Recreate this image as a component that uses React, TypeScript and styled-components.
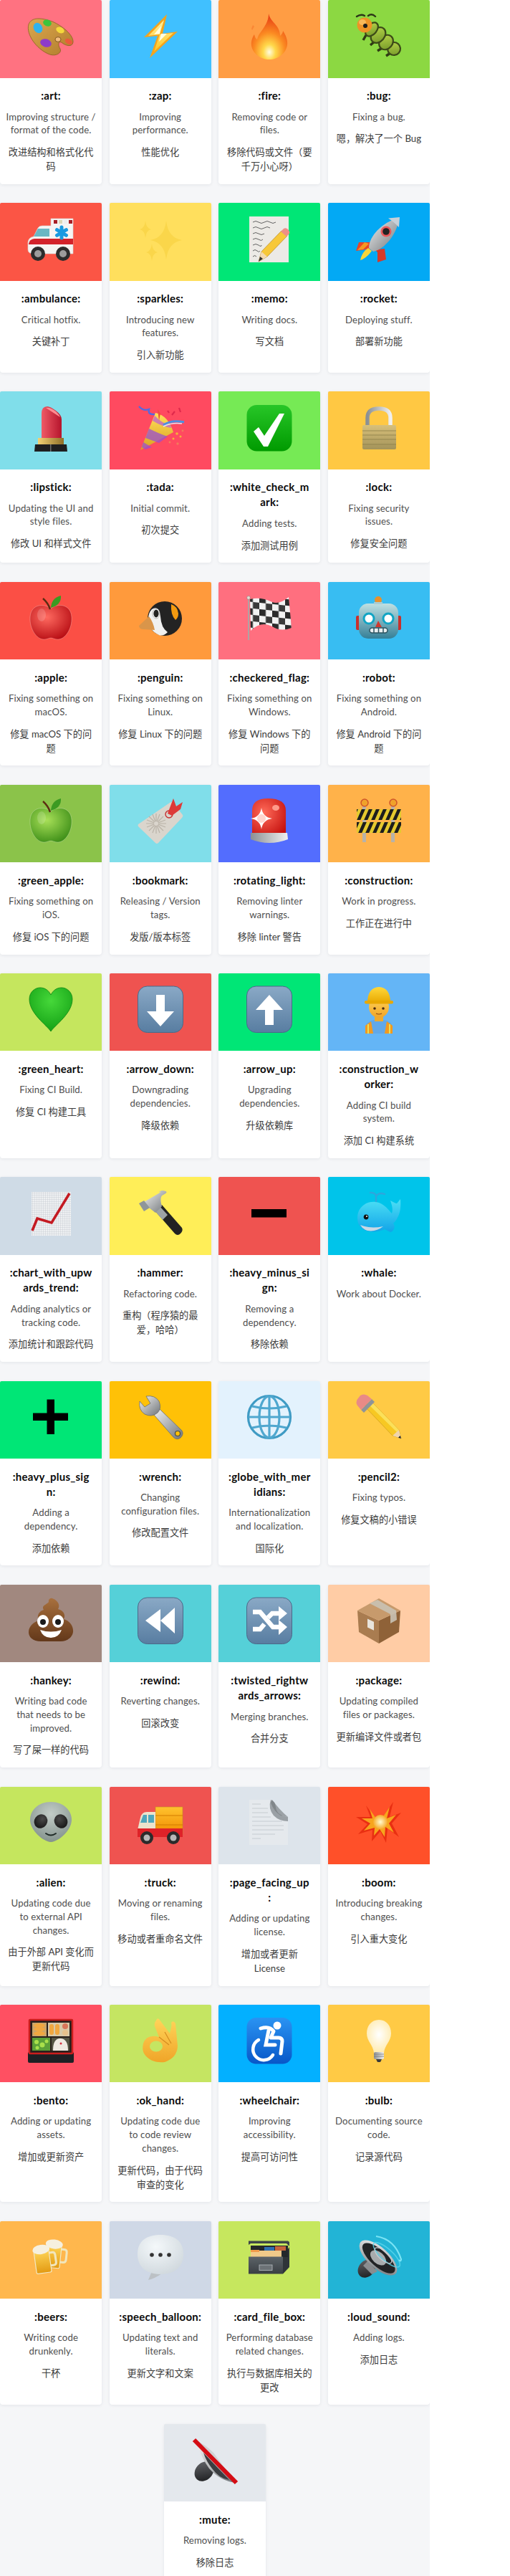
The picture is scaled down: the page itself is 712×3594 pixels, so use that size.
import React from "react";
import styled, { createGlobalStyle } from "styled-components";

const Global = createGlobalStyle`
  html, body { margin: 0; padding: 0; background: #fff; }
  body { font-family: "Lato", "Noto Sans CJK SC", sans-serif; }
`;

const Page = styled.main`
  width: 600px;
  height: 3594px;
  overflow: hidden;
  background: #f5f6f8;
`;
const Grid = styled.div`
  display: flex;
  flex-wrap: wrap;
  justify-content: center;
  align-content: flex-start;
  gap: 26.4px 10.5px;
`;
const Card = styled.article`
  width: 142.1px;
  display: flex;
  flex-direction: column;
  background: #fff;
  border-radius: 4px;
  box-shadow: 0 1px 4px rgba(30, 40, 60, 0.08);
`;
const Thumb = styled.div<{ $bg: string }>`
  height: 108.5px;
  flex: none;
  box-sizing: border-box;
  padding-top: 18.5px;
  display: flex;
  justify-content: center;
  align-items: flex-start;
  background: ${(p) => p.$bg};
  border-radius: 2px 2px 0 0;
`;
const Emoji = styled.svg`
  width: 64px;
  height: 64px;
  display: block;
  overflow: visible;
`;
const Body = styled.div`
  padding: 14.5px 2px 14.8px;
  text-align: center;
`;
const Title = styled.h3`
  margin: 0;
  font-size: 15px;
  line-height: 21.2px;
  font-weight: 700;
  letter-spacing: 0.25px;
  color: #0a0a0a;
  white-space: pre;
`;
const Desc = styled.p`
  margin: 9.3px 0 0;
  font-size: 13.2px;
  line-height: 18.7px;
  font-weight: 400;
  letter-spacing: 0.1px;
  color: #4f4f4f;
  white-space: pre;
`;
const Zh = styled.p`
  margin: 11px 0 0;
  font-size: 13.2px;
  line-height: 20px;
  font-weight: 400;
  color: #3c3c3c;
  white-space: pre;
`;
const Hidden = styled.svg`
  position: absolute;
  width: 0;
  height: 0;
`;

const lg = (id: string, a: string, b: string, x2 = 0, y2 = 1) => (
  <linearGradient id={id} x1="0" y1="0" x2={x2} y2={y2}>
    <stop offset="0" stopColor={a} />
    <stop offset="1" stopColor={b} />
  </linearGradient>
);
const rg = (id: string, a: string, b: string, cx = 0.4, cy = 0.35, r = 0.7) => (
  <radialGradient id={id} cx={cx} cy={cy} r={r}>
    <stop offset="0" stopColor={a} />
    <stop offset="1" stopColor={b} />
  </radialGradient>
);

const Defs = () => (
  <Hidden aria-hidden="true">
    <defs>
      {lg("btn", "#8aa9c6", "#587da1")}
      {lg("chk", "#27c627", "#009a00")}
      {lg("wch", "#2a93f2", "#0857c8")}
      {lg("metal", "#f1f1f1", "#6f7478", 1, 1)}
      {lg("metalH", "#8b9094", "#f0f0f0", 1, 0)}
      {lg("gold", "#d8c07a", "#a3935a")}
      {lg("brass", "#f3d173", "#8f6f28", 1, 0)}
      {lg("pal", "#dca84f", "#b07c2c", 1, 1)}
      {lg("bolt", "#fff2a0", "#ffc51f")}
      {lg("lip", "#ef5a66", "#b5142c", 1, 0)}
      {lg("hat", "#ffd83a", "#e8a800")}
      {lg("skin", "#ffd45a", "#f0a528")}
      {lg("head", "#bfe0e2", "#357f97")}
      {lg("cone", "#ffe05a", "#d9a020")}
      {lg("poo", "#a8703d", "#63381a")}
      {lg("beer", "#ffd75a", "#e39a12")}
      {lg("whale", "#4de0f5", "#12a4e8")}
      {lg("truck", "#ffc22e", "#f08c00")}
      {lg("file", "#5c6368", "#3a3f43")}
      {lg("mag", "#6a6c70", "#161719", 1, 1)}
      {lg("cat", "#bcd84c", "#6f9426", 1, 1)}
      {rg("redA", "#ff6a60", "#b80e14")}
      {rg("grnA", "#a8e058", "#3e8f18")}
      {rg("heart", "#46d83a", "#0d9a10", 0.5, 0.3, 0.8)}
      <radialGradient id="fire" cx="0.5" cy="0.84" r="0.78">
        <stop offset="0" stopColor="#fffce0" />
        <stop offset="0.22" stopColor="#ffd84a" />
        <stop offset="0.55" stopColor="#fb8a22" />
        <stop offset="1" stopColor="#e83f14" />
      </radialGradient>
      {rg("alien", "#c3cdc8", "#7b8a85", 0.5, 0.3, 0.8)}
      {rg("siren", "#ff6a58", "#c4100e", 0.35, 0.4, 0.8)}
      {rg("bulb", "#ffffff", "#ffe9a8", 0.5, 0.45, 0.62)}
      {rg("glob", "#f4f8fa", "#c9d2d8", 0.4, 0.3, 0.9)}
      {rg("penH", "#4a4a4a", "#111", 0.5, 0.3, 0.8)}
      {rg("boom", "#fffbd0", "#f6a21a", 0.5, 0.5, 0.55)}
      <pattern id="checks" width="18" height="18" patternUnits="userSpaceOnUse" patternTransform="skewY(6)">
        <rect width="18" height="18" fill="#f2f2f2" />
        <rect width="9" height="9" fill="#2b2b2b" />
        <rect x="9" y="9" width="9" height="9" fill="#3a3a3a" />
      </pattern>
      <pattern id="hazard" width="10" height="14" patternUnits="userSpaceOnUse" patternTransform="skewX(-24)">
        <rect width="10" height="14" fill="#1d1d1d" />
        <rect width="5" height="14" fill="#e5c92e" />
      </pattern>
      <pattern id="chartGrid" width="3" height="3" patternUnits="userSpaceOnUse">
        <rect width="3" height="3" fill="#eef0f2" />
        <path d="M3 0H0V3" fill="none" stroke="#b9c0c6" strokeWidth=".6" />
      </pattern>
    </defs>
  </Hidden>
);

const star = (cx: number, cy: number, rx: number, ry: number) =>
  `M${cx} ${cy - ry}Q${cx + rx * 0.12} ${cy - ry * 0.12} ${cx + rx} ${cy}Q${cx + rx * 0.12} ${cy + ry * 0.12} ${cx} ${cy + ry}Q${cx - rx * 0.12} ${cy + ry * 0.12} ${cx - rx} ${cy}Q${cx - rx * 0.12} ${cy - ry * 0.12} ${cx} ${cy - ry}Z`;

const Art = (
  <>
    <path d="M1 15C5 4 20 6 34 11C48 17 64 30 63 40C62 47 53 45 48 41C43 37 41 43 45 49C48 55 38 61 28 56C12 49-3 29 1 15Z" fill="url(#pal)" stroke="#8a5f22" strokeWidth=".8" />
    <ellipse cx="14" cy="20" rx="6" ry="7.5" fill="#2fb3ee" transform="rotate(-30 14 20)" />
    <ellipse cx="27" cy="13" rx="6" ry="4.6" fill="#3cc43c" transform="rotate(20 27 13)" />
    <ellipse cx="45" cy="23" rx="6" ry="4" fill="#f5d83c" transform="rotate(25 45 23)" />
    <ellipse cx="25" cy="41" rx="8" ry="5.6" fill="#8e3bc8" transform="rotate(15 25 41)" />
    <ellipse cx="42" cy="36" rx="4" ry="3.4" fill="#f2bc7c" stroke="#6b4315" strokeWidth=".8" />
    <ellipse cx="57" cy="39" rx="5.6" ry="3.6" fill="#ea5a3c" transform="rotate(30 57 39)" />
  </>
);
const Zap = (
  <>
    <path d="M41 1L9 33L28 31L17 62L56 25L35 28Z" fill="#f5a31c" />
    <path d="M37 9L15 31L31 29L23 53L50 27L31 29Z" fill="url(#bolt)" />
    <path d="M33 17L23 29L33 28L30 39L41 28L31 28Z" fill="#fffde0" />
  </>
);
const Fire = (
  <>
    <path d="M31 0C33 9 40 13 44 20C46 24 47 27 47 31C50 28 51 26 51 24C55 30 58 37 57 44C55 56 44 64 32 64C20 64 9 56 7 45C6 38 9 32 11 29C12 33 13 35 15 36C17 28 21 25 24 20C28 14 31 8 31 0Z" fill="url(#fire)" />
    <path d="M9 16L7 21L8 23L11 18Z" fill="#f6782c" opacity=".6" />
  </>
);
const seg = (x: number, y: number, rx: number, ry: number) => (
  <ellipse cx={x} cy={y} rx={rx} ry={ry} fill="url(#cat)" stroke="#3c4a18" strokeWidth="2.200" transform={`rotate(40 ${x} ${y})`} />
);
const Bug = (
  <>
    <path d="M14 30L10 37M27 38L20 44M38 47L30 52M48 55L42 59" stroke="#2f3a14" strokeWidth="3.400" />
    {seg(53, 49, 9, 9)}
    {seg(42, 40, 9, 11)}
    {seg(31, 30, 9, 12)}
    {seg(22, 22, 7, 11)}
    <circle cx="12" cy="16" r="10.500" fill="#ee9326" />
    <ellipse cx="9" cy="12" rx="5" ry="4" fill="#f8b85a" />
    <circle cx="13" cy="17" r="3" fill="#1c1c1c" />
    <path d="M1 4Q7 0 12 3M17 3Q22-1 27 4" fill="none" stroke="#2c3518" strokeWidth="2.400" strokeLinecap="round" />
  </>
);
const Ambulance = (
  <>
    <path d="M32 3H63V52H8Q0 52 0 46V36Q1 29 8 28L14 16Q16 13 20 13H32Z" fill="#f6f4f2" stroke="#d8d2cc" strokeWidth=".6" />
    <path d="M8 28L14 17H30V28Z" fill="#6bb7c4" />
    <path d="M1 38Q2 32 9 31H63V39H1Z" fill="#d3222a" />
    <rect x="36" y="5" width="5" height="5" fill="#a81f25" />
    <rect x="43" y="5" width="5" height="5" fill="#dcd8b8" />
    <rect x="50" y="5" width="5" height="5" fill="#eee" />
    <rect x="57" y="5" width="5" height="5" fill="#a81f25" />
    <g stroke="#199ae0" strokeWidth="5" strokeLinecap="round">
      <path d="M47 15V30M40.500 18.700L53.500 26.300M53.500 18.700L40.500 26.300" />
    </g>
    <circle cx="14" cy="52" r="10" fill="#2c2c2c" /><circle cx="14" cy="52" r="5" fill="#9c9c9c" />
    <circle cx="49" cy="52" r="10" fill="#2c2c2c" /><circle cx="49" cy="52" r="5" fill="#9c9c9c" />
  </>
);
const Sparkles = (
  <g fill="#fad64a">
    <path d={star(40, 33, 22, 27)} />
    <path d={star(11, 18, 8, 12)} />
    <path d={star(20, 50, 8, 12)} />
  </g>
);
const Memo = (
  <>
    <rect x="4" y="0" width="55" height="64" fill="#eceae6" />
    <path d="M9 8q4-3 8 0t8 0 8 0 8 0M9 16q4-3 8 0t8 0 8 0M9 24q4-3 8 0t8 0M9 32q4-3 8 0t6 0M9 40q4-3 8 0t4 0M9 48q3-3 6 0t4 0M9 56q3-3 5 0" fill="none" stroke="#555" strokeWidth=".9" />
    <path d="M17 63L21 49L49 20L57 27L29 56Z" fill="#f7c83a" stroke="#b88a1f" strokeWidth=".7" />
    <path d="M48 21L52 17Q55 15 58 18L60 21Q61 23 59 25L56 28Z" fill="#ee8f86" />
    <path d="M17 63L21 49L29 56Z" fill="#f4d9b0" />
    <path d="M17 63L19 56L23 59Z" fill="#333" />
  </>
);
const Rocket = (
  <g>
    <path d="M21 36L4 36L0 48L14 46L19 50Z" fill="#e8452a" />
    <path d="M2 47L12 36L18 38L10 46Z" fill="#f59a22" />
    <path d="M40 45L42 60L30 64L30 50L26 46Z" fill="#d63a2a" />
    <path d="M6 61Q8 50 17 44L22 48Q15 58 6 61Z" fill="#f7d63a" />
    <path d="M18 44C18 28 36 8 60 2C58 24 40 46 24 49Z" fill="url(#metal)" />
    <circle cx="42" cy="21" r="7.500" fill="#e9585a" /><circle cx="42" cy="21" r="4.800" fill="#222" />
    <path d="M45 2.500L61 1L60 15Q52 7 45 2.500Z" fill="#c7d0d8" />
  </g>
);
const Lipstick = (
  <>
    <path d="M19 46V12Q19 2 27 2Q31 2 39 8Q47 14 47 20V46Z" fill="url(#lip)" />
    <path d="M25 4Q31 3 39 9Q44 14 45 17Q31 8 25 4Z" fill="#ff8c92" />
    <rect x="14" y="46" width="36" height="9" fill="url(#brass)" />
    <path d="M10 55H54L55 65H9Z" fill="#1f1f1f" />
    <rect x="31" y="55" width="1.500" height="10" fill="#6c6c6c" />
  </>
);
const Tada = (
  <>
    <path d="M4 63L25 11Q43 15 50 38Z" fill="url(#cone)" />
    <path d="M11 46L16 33Q30 40 42 44L30 53ZM6 59L8 52Q15 56 20 59L11 62Z" fill="#9a4fd0" opacity=".75" />
    <path d="M21 22Q34 30 47 32L46 28Q34 26 24 15Z" fill="#b95ad8" opacity=".7" />
    <path d="M36 28Q48 20 65 24" fill="none" stroke="#4d8fe0" strokeWidth="3" />
    <path d="M36 30Q48 24 62 26" fill="none" stroke="#e6e4ef" strokeWidth="1.500" />
    <path d="M24 13Q14 14 16 6Q8 9 2 2" fill="none" stroke="#5568e0" strokeWidth="2.400" />
    <path d="M28 6L30 22L32 12Z" fill="#f0503a" />
    <path d="M48 14L52 9M58 4L60 10M42 8l2 3" stroke="#e02a4c" strokeWidth="2.200" />
    <g fill="#f5b13a"><circle cx="55" cy="40" r="1.800" /><circle cx="60" cy="44" r="1.500" /><circle cx="50" cy="47" r="1.500" /></g>
    <g fill="#f27a5a"><circle cx="56" cy="54" r="1.700" /><circle cx="45" cy="52" r="1.400" /><circle cx="63" cy="36" r="1.400" /></g>
  </>
);
const Check = (
  <>
    <rect x="0.500" y="0" width="63" height="64.500" rx="14" fill="url(#chk)" />
    <path d="M10 37L17 31L25 43L46 12L53 12L30 58L24 58Z" fill="#fff" />
  </>
);
const Lock = (
  <>
    <path d="M16 30V18Q16 5 32 5Q48 5 48 18V30" fill="none" stroke="url(#metalH)" strokeWidth="5.500" />
    <rect x="9" y="28" width="47" height="34" rx="2" fill="url(#gold)" />
    <path d="M9 36H56M9 42H56M9 48H56M9 55H56" stroke="#8c7f4a" strokeWidth=".8" />
  </>
);
const appleBody = "M32 19C22 11 4 13 3 31C2 47 12 62 22 62C27 62 29 60 32 60C35 60 37 62 42 62C52 62 62 47 61 31C60 13 42 11 32 19Z";
const Apple = (fill: string) => (
  <>
    <path d={appleBody} fill={fill} stroke="#fff" strokeOpacity=".25" strokeWidth="1" />
    <path d="M31 20Q28 11 21 5" fill="none" stroke="#5b2d12" strokeWidth="2.400" />
    <path d="M32 18Q33 4 46 1Q47 14 32 18Z" fill="#3c9a22" />
    <ellipse cx="19" cy="28" rx="6" ry="9" fill="#fff" opacity=".16" />
  </>
);
const Penguin = (
  <>
    <circle cx="38" cy="33" r="24" fill="#232323" />
    <path d="M20 20Q30 14 32 30Q33 46 42 52Q36 58 30 56Q16 50 15 34Q15 25 20 20Z" fill="#f0f0f0" />
    <ellipse cx="26" cy="26" rx="5" ry="7" fill="#fff" stroke="#888" strokeWidth=".6" />
    <ellipse cx="26" cy="26" rx="3.600" ry="5.400" fill="#222" />
    <path d="M16 30L2 43Q2 48 9 48L24 49Q22 38 16 30Z" fill="#d9954a" />
    <path d="M47 13Q56 16 57 26Q57 32 53 35Q46 28 47 13Z" fill="#f39a10" />
  </>
);
const Flag = (
  <>
    <path d="M3 5V63" stroke="#a8a8a8" strokeWidth="1.800" />
    <circle cx="3" cy="4" r="2.400" fill="#e8dcd0" stroke="#777" strokeWidth=".5" />
    <path d="M5 6Q20 2 36 10Q46 14 59 3L63 46Q48 52 36 44Q20 36 6 50Z" fill="url(#checks)" />
  </>
);
const Robot = (
  <>
    <rect x="0" y="29" width="6" height="20" rx="2" fill="#c8302c" /><rect x="57" y="29" width="6" height="20" rx="2" fill="#c8302c" />
    <rect x="4" y="12" width="55" height="49" rx="13" fill="url(#head)" />
    <circle cx="31" cy="7" r="5" fill="#e8912c" /><rect x="25" y="10" width="12" height="3" fill="#a8cdd4" />
    <circle cx="18" cy="33" r="7" fill="#fff" stroke="#12a5c4" strokeWidth="3" /><circle cx="45" cy="33" r="7" fill="#fff" stroke="#12a5c4" strokeWidth="3" />
    <path d="M31 36L36 45H27Z" fill="#cf3a30" />
    <rect x="19" y="46" width="25" height="7" rx="3.500" fill="#e8eef0" stroke="#2d5460" strokeWidth="1.500" />
    <path d="M25 46V53M31.500 46V53M38 46V53" stroke="#2d5460" strokeWidth="1.500" />
  </>
);
const Bookmark = (
  <>
    <path d="M1 37L45 7Q48 5 50 7L63 24Q64 26 62 28L29 63Q27 65 25 63L1 40Q0 38 1 37Z" fill="#dad5cd" />
    <g stroke="#b3aca0" strokeWidth="1.200">
      <path d="M26 22V50M12 36H40M16 26L36 46M36 26L16 46M21 23L31 49M31 23L21 49M13 31L39 41M39 31L13 41" opacity=".8" />
    </g>
    <circle cx="26" cy="36" r="3" fill="#dad5cd" />
    <circle cx="44" cy="23" r="5" fill="none" stroke="#c52f2e" strokeWidth="1.400" />
    <path d="M42 22L50 1L54 12L63 6L60 16L48 25Z" fill="#dd3a38" />
  </>
);
const Siren = (
  <>
    <path d="M8 50V18Q8 1 30 1Q55 1 55 18V50Z" fill="url(#siren)" />
    <path d="M6 49H57L58 58Q32 68 6 58Z" fill="url(#metalH)" />
    <path d={star(21, 29, 15, 15)} fill="#fff" />
    <circle cx="21" cy="29" r="6" fill="#ffd6cf" />
    <ellipse cx="41" cy="14" rx="5" ry="4" fill="#ff9a8a" />
  </>
);
const Construction = (
  <>
    <rect x="9" y="8" width="5" height="54" fill="#b8b2a8" /><rect x="49" y="8" width="5" height="54" fill="#b8b2a8" />
    <circle cx="12" cy="7" r="5" fill="#f0a22a" stroke="#d0552a" strokeWidth="1.500" />
    <circle cx="52" cy="7" r="5" fill="#f0a22a" stroke="#d0552a" strokeWidth="1.500" />
    <rect x="1" y="16" width="62" height="15" fill="url(#hazard)" />
    <rect x="1" y="34" width="62" height="15" fill="url(#hazard)" />
  </>
);
const Heart = <path d="M32 63C26 54 2 38 2 18C2 8 10 2 17 2C24 2 29 6 32 12C35 6 40 2 47 2C54 2 62 8 62 18C62 38 38 54 32 63Z" fill="url(#heart)" stroke="#0c8412" strokeWidth=".8" />;
const Btn = (f = "url(#btn)") => <rect x="0.500" y="0" width="63" height="64.500" rx="13" fill={f} stroke="#4a6a89" strokeWidth="1" />;
const ArrowDown = (<>{Btn()}<path d="M26 12H38V35H51L32 56L13 35H26Z" fill="#fff" /></>);
const ArrowUp = (<>{Btn()}<path d="M32 12L51 33H38V54H26V33H13Z" fill="#fff" /></>);
const Worker = (
  <>
    <path d="M13 66V57Q14 49 25 47H39Q50 49 51 57V66Z" fill="#61a8e8" />
    <path d="M13 66V55L21 49L24 66ZM51 66V55L43 49L40 66Z" fill="#f29a1e" />
    <path d="M17 66V53M47 66V53" stroke="#e8e05c" strokeWidth="2" />
    <rect x="26" y="38" width="12" height="11" fill="#eeaa2c" />
    <ellipse cx="32" cy="29" rx="14" ry="15" fill="url(#skin)" />
    <path d="M16 23Q16 2 32 1Q48 2 48 23Z" fill="url(#hat)" />
    <rect x="12" y="20" width="40" height="4.500" rx="2" fill="#e8a800" />
    <circle cx="26" cy="31" r="1.800" fill="#4a2a10" /><circle cx="38" cy="31" r="1.800" fill="#4a2a10" />
    <path d="M28 38Q32 40 36 38" fill="none" stroke="#8a4a1a" strokeWidth="1.200" />
  </>
);
const Chart = (
  <>
    <rect x="5" y="2" width="55" height="61" fill="url(#chartGrid)" />
    <path d="M6 56L13 39L33 45L58 4" fill="none" stroke="#c41a22" strokeWidth="3.600" />
  </>
);
const Hammer = (
  <>
    <path d="M24 28L34 20L62 52Q64 56 60 60Q56 64 52 60Z" fill="#222" />
    <path d="M24 28L31 22L42 34L35 41Z" fill="#9ca2a6" />
    <path d="M9 16L33 2Q26 3 34 0Q46 1 36 6Q30 8 34 22L25 31L16 24Z" fill="url(#metal)" />
    <path d="M2 18L9 14L17 24L9 29Z" fill="#8f969a" />
  </>
);
const Minus = <rect x="7" y="26" width="49" height="11.500" fill="#000" />;
const Whale = (
  <>
    <path d="M2 38C2 22 16 14 28 16C40 18 46 28 50 32C52 26 50 20 48 14C52 16 55 18 57 18C59 16 60 14 62 12C63 24 62 36 52 46C56 50 52 58 48 58L40 54C26 60 2 60 2 38Z" fill="url(#whale)" />
    <path d="M6 48Q20 54 38 50Q28 58 16 56Q9 54 6 48Z" fill="#c9d8e4" />
    <circle cx="14" cy="37" r="3.400" fill="#111" /><circle cx="15" cy="36" r="1" fill="#fff" />
    <path d="M28 15V8Q28 3 20 3M28 8Q32 2 40 5" fill="none" stroke="#2ea6dc" strokeWidth="2.400" strokeLinecap="round" />
  </>
);
const Plus = <path d="M26.500 7.500H37V26.500H56V37H37V56H26.500V37H7V26.500H26.500Z" fill="#000" />;
const Wrench = (
  <>
    <path d="M23 29L31 21L62 51Q65 56 60 61Q55 65 50 60Z" fill="url(#metal)" stroke="#6b6f72" strokeWidth=".8" />
    <path d="M3 10L10 18L18 13L12 3Q24 1 30 10Q34 20 28 26Q20 33 10 28Q1 22 3 10Z" fill="url(#metal)" stroke="#6b6f72" strokeWidth=".8" />
    <circle cx="56" cy="55" r="3.500" fill="#ffc107" stroke="#44494c" strokeWidth="1.200" />
  </>
);
const Globe = (
  <g fill="none" stroke="#4fa7cf" strokeWidth="3.200">
    <circle cx="32" cy="32" r="29.500" stroke="#3f9bc4" />
    <ellipse cx="32" cy="32" rx="14" ry="29" />
    <path d="M32 3V61M3 32H61M8 17Q32 23 56 17M8 47Q32 41 56 47" />
  </g>
);
const Pencil = (
  <>
    <path d="M12 17L20 9L60 50L63 62L51 58Z" fill="#f7c823" stroke="#c6931a" strokeWidth=".6" />
    <path d="M20 9L60 50L57 53L16 13Z" fill="#fbe05a" />
    <path d="M51 58L63 62L60 50Z" fill="#f0d5ac" />
    <path d="M59 60.800L63 62L61.800 58Z" fill="#222" />
    <path d="M7 22L22 7L26 11L11 26Z" fill="#8f9498" />
    <path d="M7 22L22 7L16 2Q10-1 6 2L2 7Q-1 12 2 16Z" fill="#e98a86" />
  </>
);
const Hankey = (
  <>
    <path d="M29 6C28 2 32 0 34 1C40 3 46 9 42 16C50 18 53 24 50 30C58 32 64 40 63 48C62 56 54 61 46 61H18C8 61 1 56 1 48C1 40 8 34 15 32C12 26 15 19 22 17C18 11 26 10 29 6Z" fill="url(#poo)" />
    <ellipse cx="21" cy="33" rx="8" ry="9" fill="#fff" /><ellipse cx="42" cy="33" rx="8" ry="9" fill="#fff" />
    <circle cx="21" cy="34" r="4" fill="#1a1a1a" /><circle cx="42" cy="34" r="4" fill="#1a1a1a" />
    <path d="M17 45Q32 50 47 45Q43 56 32 56Q21 56 17 45Z" fill="#fff" />
  </>
);
const Rewind = (<>{Btn()}<path d="M11 32L32 16V48ZM32 32L52 14V50Z" fill="#fff" /></>);
const Shuffle = (
  <>
    {Btn()}
    <path d="M9 20H19L37 41H47" fill="none" stroke="#fff" strokeWidth="6.500" />
    <path d="M9 44H19L25 37M30 28L36 22H47" fill="none" stroke="#fff" strokeWidth="6.500" />
    <path d="M45 12L57 22L45 32ZM45 31L57 41L45 52Z" fill="#fff" />
  </>
);
const Package = (
  <>
    <path d="M2 18L32 32V64L4 48Z" fill="#a97c50" />
    <path d="M62 18L32 32V64L60 48Z" fill="#8f6238" />
    <path d="M2 18L32 1L62 18L32 32Z" fill="#c79a6c" />
    <path d="M19 8L48 23L48 36L57 31L56 18L30 3Z" fill="#c9c2b4" opacity=".9" />
    <rect x="16" y="30" width="9" height="12" fill="#e8e4dc" transform="skewY(25) translate(0 -8)" />
  </>
);
const Alien = (
  <>
    <path d="M32 3C50 3 61 15 61 28C61 42 44 58 32 59C20 58 3 42 3 28C3 15 14 3 32 3Z" fill="url(#alien)" />
    <ellipse cx="18" cy="30" rx="9" ry="10" fill="url(#penH)" transform="rotate(35 18 30)" />
    <ellipse cx="46" cy="30" rx="9" ry="10" fill="url(#penH)" transform="rotate(-35 46 30)" />
    <path d="M25 47Q32 52 39 47" fill="none" stroke="#1f2a26" strokeWidth="2" strokeLinecap="round" />
  </>
);
const Truck = (
  <>
    <rect x="25" y="10" width="38" height="38" fill="url(#truck)" stroke="#c98a2c" strokeWidth=".7" />
    <path d="M25 22H63M25 35H63" stroke="#d27c00" strokeWidth="1.200" />
    <path d="M0 42L4 25Q6 17 13 17H25V42Z" fill="#ece3cb" />
    <path d="M4 32L8 21H13V32ZM15 21H23V32H15Z" fill="#4fa7bc" />
    <path d="M0 40H63V52H0Z" fill="#df2228" />
    <circle cx="13" cy="53" r="9" fill="#2b2b2b" /><circle cx="13" cy="53" r="4.500" fill="#b8b8b8" />
    <circle cx="50" cy="53" r="9" fill="#2b2b2b" /><circle cx="50" cy="53" r="4.500" fill="#b8b8b8" />
  </>
);
const Page_ = (
  <>
    <path d="M4 0H34Q40 2 41 10Q42 22 58 24V63H4Z" fill="#e5e9ed" />
    <path d="M34 0Q30 12 38 22Q46 30 58 30V24Q42 22 41 10Q40 2 34 0Z" fill="#9aa0a5" />
    <path d="M36 0Q46 14 58 24L48 22Q38 16 34 4Z" fill="#6f7478" opacity=".6" />
    <path d="M8 6H20M8 12H30M8 18H30M8 24H34M8 30H50M8 36H52M8 42H52M8 48H40M8 54H20" stroke="#c2c8ce" strokeWidth=".9" />
  </>
);
const Boom = (
  <>
    <path d="M32 32L52 3L47 24L63 18L50 33L60 52L44 40L42 60L34 44L22 58L23 42L3 48L16 34L0 24L20 24L14 8Z" fill="#e92f12" />
    <path d="M32 32L47 10L43 26L56 21L46 33L53 46L41 38L40 52L33 41L25 50L26 39L11 43L20 33L8 26L23 26L19 13Z" fill="#f7a51d" />
    <circle cx="34" cy="31" r="10" fill="url(#boom)" />
  </>
);
const Bento = (
  <>
    <rect x="0" y="48" width="64" height="15" rx="2" fill="#1d2024" />
    <rect x="2" y="3" width="60" height="47" rx="1" fill="#2a201c" stroke="#cc1d1c" strokeWidth="2.500" />
    <rect x="6" y="7" width="20" height="19" fill="#caa56a" /><rect x="28" y="7" width="30" height="19" fill="#d8c9a8" />
    <rect x="6" y="28" width="25" height="18" fill="#5ca038" /><rect x="33" y="28" width="25" height="18" fill="#554" />
    <g fill="#f0a740"><ellipse cx="16" cy="11" rx="8" ry="3" /><ellipse cx="16" cy="16" rx="8" ry="3" /><ellipse cx="16" cy="22" rx="8" ry="3" /><rect x="30" y="9" width="6" height="15" rx="3" /><rect x="38" y="9" width="6" height="15" rx="3" /></g>
    <circle cx="52" cy="12" r="4" fill="#d8765a" /><circle cx="52" cy="21" r="4" fill="#e6c08c" />
    <g fill="#a9e04a"><circle cx="12" cy="34" r="3" /><circle cx="20" cy="38" r="3.500" /><circle cx="26" cy="33" r="2.500" /><circle cx="13" cy="42" r="2.500" /></g>
    <path d="M35 46Q35 29 45 29Q56 29 56 46Z" fill="#efe9e2" />
    <circle cx="46" cy="36" r="1.500" fill="#d43040" />
  </>
);
const OkHand = (
  <>
    <path d="M26 4Q27 0 30 2L45 22L47 14Q48 10 47 7Q50 3 53 8L56 40Q55 56 38 62Q18 64 9 50Q6 44 8 36Q12 24 26 26L30 27L24 12Q23 7 26 4Z" fill="url(#skin)" />
    <ellipse cx="26" cy="40" rx="9" ry="7.500" fill="#c5e562" />
    <path d="M30 27L44 38M38 20L47 36" fill="none" stroke="#d48c20" strokeWidth="1.200" />
  </>
);
const Wheelchair = (
  <>
    <rect x="0.500" y="0" width="63" height="64.500" rx="13" fill="url(#wch)" />
    <circle cx="43" cy="11" r="5.500" fill="#fff" />
    <path d="M20 15Q32 11 38 19L34 28H45Q50 28 50 33L48 50" fill="none" stroke="#fff" strokeWidth="5" strokeLinecap="round" strokeLinejoin="round" />
    <path d="M31 18L27 38H40" fill="none" stroke="#fff" strokeWidth="5" strokeLinecap="round" />
    <path d="M17 31A15 15 0 1 0 37 52" fill="none" stroke="#fff" strokeWidth="4.500" strokeLinecap="round" />
  </>
);
const Bulb = (
  <>
    <path d="M32 3C43 3 49 12 49 22C49 33 40 38 39 49H25C24 38 15 33 15 22C15 12 21 3 32 3Z" fill="url(#bulb)" />
    <rect x="25" y="48" width="14" height="10" rx="2" fill="url(#metalH)" />
    <path d="M25 51H39M25 54H39" stroke="#777" strokeWidth=".8" />
    <path d="M28 58H36L34 62H30Z" fill="#3c3c3c" />
  </>
);
const Mug = (x: number, y: number, r: number) => (
  <g transform={`translate(${x} ${y}) rotate(${r})`}>
    <path d="M19 12H25Q29 12 29 16V26Q29 30 25 30H19" fill="none" stroke="#f1e6bc" strokeWidth="3" />
    <rect x="0" y="6" width="21" height="33" rx="2" fill="url(#beer)" stroke="#f2e8c4" strokeWidth="1.200" />
    <ellipse cx="10.500" cy="6" rx="12" ry="6.500" fill="#f6f0de" />
  </g>
);
const Beers = (<>{Mug(27, 7, 6)}{Mug(7, 17, -8)}</>);
const Speech = (
  <>
    <path d="M20 52L15 64Q24 62 34 55Z" fill="#bcc1c5" />
    <path d="M32 1C52 1 64 10 64 28C64 47 50 56 32 56C14 56 0 47 0 28C0 10 12 1 32 1Z" fill="url(#glob)" />
    <circle cx="20" cy="29" r="2.800" fill="#333" /><circle cx="32" cy="29" r="2.800" fill="#333" /><circle cx="44" cy="29" r="2.800" fill="#333" />
  </>
);
const CardFile = (
  <>
    <path d="M51 31L60 18V46L51 55.500Z" fill="#2f3438" />
    <path d="M6 16H58V32H6Z" fill="#24282b" />
    <rect x="25" y="18" width="14" height="5" fill="#2e6eb0" />
    <rect x="40" y="17" width="15" height="6" fill="#c8643c" />
    <path d="M6 23H49V32H6Z" fill="#f0c989" />
    <path d="M6 22H18V25H6Z" fill="#f09a4a" />
    <path d="M3 9.500H58L60 11V17L56 13H6L3 15Z" fill="#3e4448" />
    <rect x="3" y="31.500" width="48" height="24" fill="url(#file)" />
    <rect x="18" y="43" width="18" height="7.500" fill="#6c7276" stroke="#aeb4b8" strokeWidth=".9" />
  </>
);
const Loud = (
  <>
    <ellipse cx="15" cy="48" rx="11" ry="14" fill="url(#mag)" transform="rotate(42 15 48)" />
    <path d="M16 38L30 52L22 56L10 44Z" fill="#8a8d90" />
    <g transform="rotate(42 31 33)">
      <ellipse cx="31" cy="33" rx="33" ry="14.500" fill="url(#metal)" />
      <ellipse cx="32" cy="33" rx="29" ry="11.500" fill="#212325" />
      <ellipse cx="31" cy="33" rx="13" ry="8" fill="#a8abad" />
      <ellipse cx="33" cy="22" rx="24" ry="8" fill="none" stroke="#59d6ec" strokeWidth="1.600" opacity=".8" transform="translate(4 0)" />
      <ellipse cx="34" cy="26" rx="15" ry="6" fill="none" stroke="#c4ccd0" strokeWidth="1.200" />
    </g>
    <path d="M28 3Q54 7 63 35Q63 39 60 36" fill="none" stroke="#7be4f5" strokeWidth="2.200" />
  </>
);
const Mute = (
  <>
    <ellipse cx="17" cy="48" rx="12" ry="15" fill="url(#mag)" transform="rotate(42 17 48)" />
    <path d="M4 4Q20 22 24 36L30 44Q44 52 61 62Q44 42 30 22Q18 10 4 4Z" fill="#cfd2d4" />
    <path d="M8 12L62 64Q40 62 24 44Q14 30 8 12Z" fill="url(#metal)" />
    <path d="M16 22L52 60Q38 58 28 44Q20 34 16 22Z" fill="#3b3d40" />
    <path d="M3 4L62 64" stroke="#d40c14" strokeWidth="6" />
  </>
);

type Item = { bg: string; t: string; d: string; z?: string; icon: React.ReactNode };
const fso = "Fixing something on\n";
const items: Item[] = [
  { bg: "#ff7281", t: ":art:", d: "Improving structure /\nformat of the code.", z: "改进结构和格式化代\n码", icon: Art },
  { bg: "#40c0ff", t: ":zap:", d: "Improving\nperformance.", z: "性能优化", icon: Zap },
  { bg: "#ff9d44", t: ":fire:", d: "Removing code or\nfiles.", z: "移除代码或文件（要\n千万小心呀）", icon: Fire },
  { bg: "#8cd842", t: ":bug:", d: "Fixing a bug.", z: "嗯，解决了一个 Bug", icon: Bug },
  { bg: "#fb5545", t: ":ambulance:", d: "Critical hotfix.", z: "关键补丁", icon: Ambulance },
  { bg: "#ffdf5d", t: ":sparkles:", d: "Introducing new\nfeatures.", z: "引入新功能", icon: Sparkles },
  { bg: "#00e676", t: ":memo:", d: "Writing docs.", z: "写文档", icon: Memo },
  { bg: "#03a9f4", t: ":rocket:", d: "Deploying stuff.", z: "部署新功能", icon: Rocket },
  { bg: "#80deea", t: ":lipstick:", d: "Updating the UI and\nstyle files.", z: "修改 UI 和样式文件", icon: Lipstick },
  { bg: "#ff4a60", t: ":tada:", d: "Initial commit.", z: "初次提交", icon: Tada },
  { bg: "#76ea55", t: ":white_check_m\nark:", d: "Adding tests.", z: "添加测试用例", icon: Check },
  { bg: "#ffc843", t: ":lock:", d: "Fixing security\nissues.", z: "修复安全问题", icon: Lock },
  { bg: "#fb4f45", t: ":apple:", d: fso + "macOS.", z: "修复 macOS 下的问\n题", icon: Apple("url(#redA)") },
  { bg: "#ff9a3c", t: ":penguin:", d: fso + "Linux.", z: "修复 Linux 下的问题", icon: Penguin },
  { bg: "#ff6f7f", t: ":checkered_flag:", d: fso + "Windows.", z: "修复 Windows 下的\n问题", icon: Flag },
  { bg: "#38bdf2", t: ":robot:", d: fso + "Android.", z: "修复 Android 下的问\n题", icon: Robot },
  { bg: "#8bc34a", t: ":green_apple:", d: fso + "iOS.", z: "修复 iOS 下的问题", icon: Apple("url(#grnA)") },
  { bg: "#80deea", t: ":bookmark:", d: "Releasing / Version\ntags.", z: "发版/版本标签", icon: Bookmark },
  { bg: "#536dfe", t: ":rotating_light:", d: "Removing linter\nwarnings.", z: "移除 linter 警告", icon: Siren },
  { bg: "#ffb24a", t: ":construction:", d: "Work in progress.", z: "工作正在进行中", icon: Construction },
  { bg: "#c5e65e", t: ":green_heart:", d: "Fixing CI Build.", z: "修复 CI 构建工具", icon: Heart },
  { bg: "#ef5350", t: ":arrow_down:", d: "Downgrading\ndependencies.", z: "降级依赖", icon: ArrowDown },
  { bg: "#00e676", t: ":arrow_up:", d: "Upgrading\ndependencies.", z: "升级依赖库", icon: ArrowUp },
  { bg: "#64b5f6", t: ":construction_w\norker:", d: "Adding CI build\nsystem.", z: "添加 CI 构建系统", icon: Worker },
  { bg: "#cfdbe6", t: ":chart_with_upw\nards_trend:", d: "Adding analytics or\ntracking code.", z: "添加统计和跟踪代码", icon: Chart },
  { bg: "#ffee58", t: ":hammer:", d: "Refactoring code.", z: "重构（程序猿的最\n爱，哈哈）", icon: Hammer },
  { bg: "#ef5350", t: ":heavy_minus_si\ngn:", d: "Removing a\ndependency.", z: "移除依赖", icon: Minus },
  { bg: "#00c4ea", t: ":whale:", d: "Work about Docker.", icon: Whale },
  { bg: "#00e676", t: ":heavy_plus_sig\nn:", d: "Adding a\ndependency.", z: "添加依赖", icon: Plus },
  { bg: "#ffc107", t: ":wrench:", d: "Changing\nconfiguration files.", z: "修改配置文件", icon: Wrench },
  { bg: "#e3f2fd", t: ":globe_with_mer\nidians:", d: "Internationalization\nand localization.", z: "国际化", icon: Globe },
  { bg: "#ffca45", t: ":pencil2:", d: "Fixing typos.", z: "修复文稿的小错误", icon: Pencil },
  { bg: "#a1887f", t: ":hankey:", d: "Writing bad code\nthat needs to be\nimproved.", z: "写了屎一样的代码", icon: Hankey },
  { bg: "#55d0d8", t: ":rewind:", d: "Reverting changes.", z: "回滚改变", icon: Rewind },
  { bg: "#55d0d8", t: ":twisted_rightw\nards_arrows:", d: "Merging branches.", z: "合并分支", icon: Shuffle },
  { bg: "#ffcca5", t: ":package:", d: "Updating compiled\nfiles or packages.", z: "更新编译文件或者包", icon: Package },
  { bg: "#c5e65e", t: ":alien:", d: "Updating code due\nto external API\nchanges.", z: "由于外部 API 变化而\n更新代码", icon: Alien },
  { bg: "#ef5350", t: ":truck:", d: "Moving or renaming\nfiles.", z: "移动或者重命名文件", icon: Truck },
  { bg: "#dde4eb", t: ":page_facing_up\n:", d: "Adding or updating\nlicense.", z: "增加或者更新\nLicense", icon: Page_ },
  { bg: "#ff5029", t: ":boom:", d: "Introducing breaking\nchanges.", z: "引入重大变化", icon: Boom },
  { bg: "#ff5062", t: ":bento:", d: "Adding or updating\nassets.", z: "增加或更新资产", icon: Bento },
  { bg: "#c5e562", t: ":ok_hand:", d: "Updating code due\nto code review\nchanges.", z: "更新代码，由于代码\n审查的变化", icon: OkHand },
  { bg: "#03b0ff", t: ":wheelchair:", d: "Improving\naccessibility.", z: "提高可访问性", icon: Wheelchair },
  { bg: "#ffca45", t: ":bulb:", d: "Documenting source\ncode.", z: "记录源代码", icon: Bulb },
  { bg: "#ffb74d", t: ":beers:", d: "Writing code\ndrunkenly.", z: "干杯", icon: Beers },
  { bg: "#cfd8e6", t: ":speech_balloon:", d: "Updating text and\nliterals.", z: "更新文字和文案", icon: Speech },
  { bg: "#c6e75e", t: ":card_file_box:", d: "Performing database\nrelated changes.", z: "执行与数据库相关的\n更改", icon: CardFile },
  { bg: "#22b4d6", t: ":loud_sound:", d: "Adding logs.", z: "添加日志", icon: Loud },
  { bg: "#e4e8ed", t: ":mute:", d: "Removing logs.", z: "移除日志", icon: Mute },
];

export default function App() {
  return (
    <Page>
      <Global />
      <Defs />
      <Grid>
        {items.map((it) => (
          <Card key={it.t}>
            <Thumb $bg={it.bg}>
              <Emoji viewBox="0 0 64 64">{it.icon}</Emoji>
            </Thumb>
            <Body>
              <Title>{it.t}</Title>
              <Desc>{it.d}</Desc>
              {it.z && <Zh>{it.z}</Zh>}
            </Body>
          </Card>
        ))}
      </Grid>
    </Page>
  );
}
